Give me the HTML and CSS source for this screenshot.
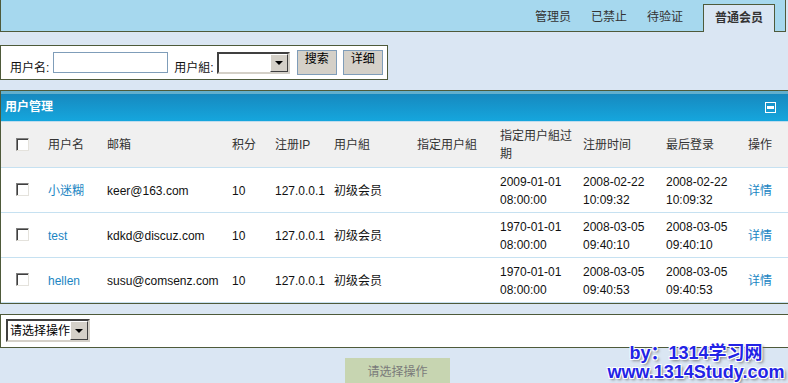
FILE: index.html
```html
<!DOCTYPE html>
<html lang="zh-CN">
  <head>
    <meta charset="UTF-8" />
    <title>用户管理</title>
    <link rel="stylesheet" href="styles.css">
  </head>
  <body>
    <div class="topbar">
      <ul class="tabs">
        <li>管理员</li>
        <li>已禁止</li>
        <li>待验证</li>
        <li class="current">普通会员</li>
      </ul>
    </div>

    <form class="search">
      <label for="username">用户名:</label>
      <input type="text" id="username" class="text-input" />
      <label for="group" class="group-label">用户組:</label>
      <span class="select select-group"><select id="group"><option></option></select></span>
      <button type="button" class="btn btn-search">搜索</button>
      <button type="button" class="btn">详细</button>
    </form>

    <div class="panel">
      <div class="panel-title">
        <h3>用户管理</h3>
        <span class="toggle"></span>
      </div>
      <table class="users">
        <colgroup>
          <col style="width:43px"><col style="width:59px"><col style="width:125px"><col style="width:43px">
          <col style="width:59px"><col style="width:83px"><col style="width:83px"><col style="width:83px">
          <col style="width:83px"><col style="width:82px"><col style="width:44px">
        </colgroup>
        <thead>
          <tr>
            <th class="cb"><input type="checkbox" class="check" /></th>
            <th>用户名</th>
            <th>邮箱</th>
            <th>积分</th>
            <th>注册IP</th>
            <th>用户組</th>
            <th>指定用户組</th>
            <th>指定用户組过期</th>
            <th>注册时间</th>
            <th>最后登录</th>
            <th>操作</th>
          </tr>
        </thead>
        <tbody>
          <tr>
            <td class="cb"><input type="checkbox" class="check" /></td>
            <td><a href="#">小迷糊</a></td>
            <td>keer@163.com</td>
            <td>10</td>
            <td>127.0.0.1</td>
            <td>初级会员</td>
            <td></td>
            <td>2009-01-01<br>08:00:00</td>
            <td>2008-02-22<br>10:09:32</td>
            <td>2008-02-22<br>10:09:32</td>
            <td><a href="#">详情</a></td>
          </tr>
          <tr>
            <td class="cb"><input type="checkbox" class="check" /></td>
            <td><a href="#">test</a></td>
            <td>kdkd@discuz.com</td>
            <td>10</td>
            <td>127.0.0.1</td>
            <td>初级会员</td>
            <td></td>
            <td>1970-01-01<br>08:00:00</td>
            <td>2008-03-05<br>09:40:10</td>
            <td>2008-03-05<br>09:40:10</td>
            <td><a href="#">详情</a></td>
          </tr>
          <tr>
            <td class="cb"><input type="checkbox" class="check" /></td>
            <td><a href="#">hellen</a></td>
            <td>susu@comsenz.com</td>
            <td>10</td>
            <td>127.0.0.1</td>
            <td>初级会员</td>
            <td></td>
            <td>1970-01-01<br>08:00:00</td>
            <td>2008-03-05<br>09:40:53</td>
            <td>2008-03-05<br>09:40:53</td>
            <td><a href="#">详情</a></td>
          </tr>
        </tbody>
      </table>
    </div>

    <div class="actions">
      <span class="select select-action"><select><option>请选择操作</option></select></span>
    </div>

    <div class="submit-row">
      <button type="button" class="submit">请选择操作</button>
    </div>

    <div class="watermark">by：1314学习网<br>www.1314Study.com</div>
  </body>
</html>
```

FILE: styles.css
```css
* {
  box-sizing: border-box;
}
body {
  margin: 0;
  background: #dae6f3;
  font: 12px "Liberation Sans", "Noto Sans CJK SC", sans-serif;
  color: #222;
  overflow: hidden;
  position: relative;
  height: 383px;
}
.topbar {
  width: 786px;
  height: 32px;
  background: #a6d8ee;
  border: 1px solid #4e5a3a;
  border-top: 0;
  padding-right: 10px;
  display: flex;
  justify-content: flex-end;
  align-items: flex-end;
}
.tabs {
  list-style: none;
  margin: 0;
  padding: 0;
  display: flex;
  align-items: flex-end;
}
.tabs li {
  height: 27px;
  line-height: 27px;
  padding: 0 10px;
  color: #333;
}
.tabs li.current {
  height: 28px;
  line-height: 26px;
  margin: 0 0 -1px 10px;
  padding: 0 11px;
  border: 1px solid #4e5a3a;
  border-bottom: 0;
  background: #dae6f3;
  font-weight: bold;
}
.search {
  margin: 13px 0 0;
  width: 388px;
  height: 35px;
  background: #fff;
  border: 1px solid #4e5a3a;
  padding: 0 0 0 9px;
  display: flex;
  align-items: center;
}
.search label {
  padding-top: 8px;
  color: #111;
}
.text-input {
  margin-left: 4px;
  width: 115px;
  height: 21px;
  border: 1px solid #7f9db9;
  padding: 0 2px;
  font: inherit;
}
.group-label {
  margin-left: 6px;
}
.select {
  position: relative;
  display: inline-block;
}
.select select {
  appearance: none;
  display: block;
  border: 2px solid;
  border-color: #404040 #d4d0c8 #d4d0c8 #404040;
  background: #fff;
  font: inherit;
  color: #000;
  padding: 0 2px;
  border-radius: 0;
}
.select::before {
  content: "";
  position: absolute;
  right: 2px;
  top: 2px;
  bottom: 2px;
  width: 16px;
  background: #d4d0c8;
  border: 1px solid;
  border-color: #fff #404040 #404040 #fff;
}
.select::after {
  content: "";
  position: absolute;
  right: 7px;
  top: 50%;
  margin-top: -2px;
  border-top: 4px solid #000;
  border-left: 4px solid transparent;
  border-right: 4px solid transparent;
}
.select-group {
  margin-left: 3px;
}
.select-group select {
  width: 73px;
  height: 22px;
}
.btn {
  margin-left: 6px;
  width: 40px;
  height: 25px;
  background: #d4d0c8;
  border: 1px solid #7f9db9;
  font: inherit;
  color: #000;
  padding: 0 0 6px;
  line-height: 15px;
}
.btn-search {
  margin-left: 7px;
}
.panel {
  margin-top: 10px;
  border: 1px solid #4e5a3a;
  border-right: 0;
  background: #fff;
}
.panel-title {
  height: 31px;
  background: linear-gradient(#62afcd 0, #62afcd 3px, #1789bf 3px, #15a6dd 100%);
  border-bottom: 1px solid #c0dced;
  display: flex;
  align-items: center;
  justify-content: space-between;
  padding: 2px 12px 0 4px;
}
.panel-title h3 {
  margin: 0;
  font-size: 12px;
  color: #fff;
  line-height: 28px;
}
.toggle {
  position: relative;
  width: 11px;
  height: 11px;
  border: 1px solid #fff;
}
.toggle::after {
  content: "";
  position: absolute;
  left: 1px;
  right: 1px;
  top: 3px;
  height: 3px;
  background: #fff;
}
.users {
  width: 787px;
  border-collapse: collapse;
  table-layout: fixed;
}
.users th,
.users td {
  height: 45px;
  padding: 2px 4px 0;
  text-align: left;
  vertical-align: middle;
  line-height: 18px;
  font-weight: normal;
  border-bottom: 1px solid #c6e1f1;
  white-space: normal;
}
.users th {
  background: #f0f0f0;
  color: #333;
}
.users td {
  color: #111;
}
.users .cb {
  text-align: center;
  padding: 0;
}
.users a {
  color: #1a85c3;
  text-decoration: none;
}
.check {
  appearance: none;
  display: block;
  margin: 0 auto;
  width: 13px;
  height: 13px;
  background: #fff;
  border: 1px solid;
  border-color: #808080 #e4e2dc #e4e2dc #808080;
  box-shadow: inset 1px 1px 0 #404040;
}
.actions {
  margin-top: 10px;
  height: 34px;
  background: #fff;
  border: 1px solid #4e5a3a;
  border-right: 0;
  padding-left: 5px;
  display: flex;
  align-items: center;
}
.select-action select {
  width: 84px;
  height: 23px;
  padding-left: 2px;
}
.submit-row {
  margin-top: 10px;
  display: flex;
  justify-content: center;
  padding-left: 7px;
}
.submit {
  width: 105px;
  height: 25px;
  border: 0;
  background: #c7d5b1;
  color: #7a7a7a;
  font: inherit;
}
.watermark {
  position: absolute;
  left: 606px;
  top: 344px;
  width: 180px;
  text-align: center;
  font: bold 18px/19px "Liberation Sans", "Noto Sans CJK SC", sans-serif;
  color: #2323e6;
  text-shadow: 1px 1px 0 #fff, -1px -1px 0 #fff, 1px -1px 0 #fff, -1px 1px 0 #fff, 2px 2px 3px #777;
}
```
